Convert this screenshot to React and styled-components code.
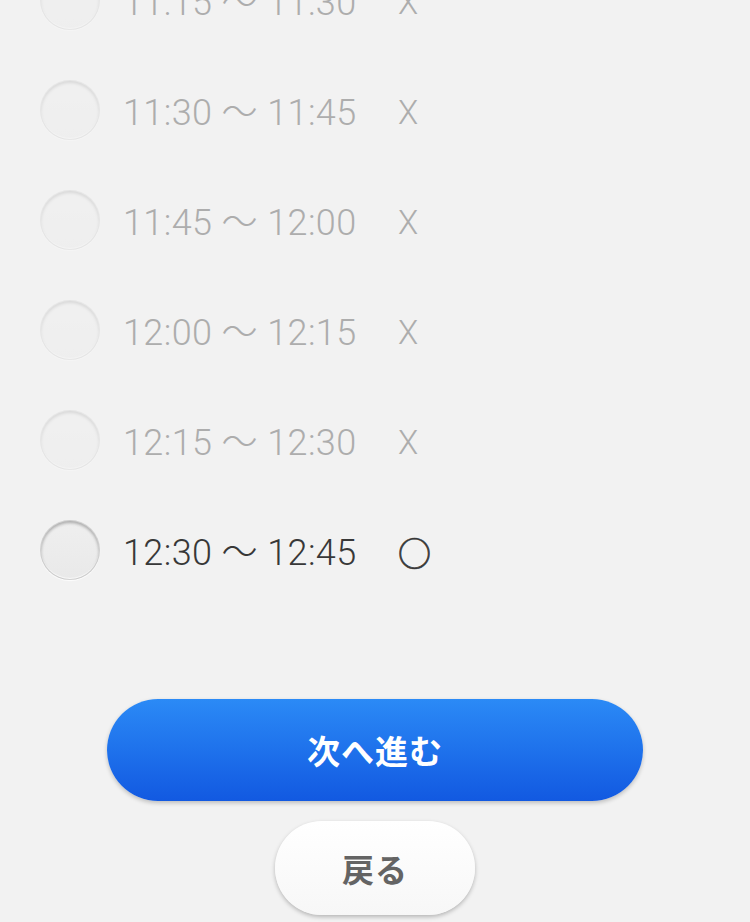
import React, { useState } from 'react';
import styled, { createGlobalStyle } from 'styled-components';

const GlobalStyle = createGlobalStyle`
  html, body {
    margin: 0;
    padding: 0;
    background: #f2f2f2;
  }
  body {
    font-family: "Noto Sans CJK JP", "Noto Sans", sans-serif;
    overflow: hidden;
  }
`;

const slots = [
  { from: '11:15', to: '11:30', open: false },
  { from: '11:30', to: '11:45', open: false },
  { from: '11:45', to: '12:00', open: false },
  { from: '12:00', to: '12:15', open: false },
  { from: '12:15', to: '12:30', open: false },
  { from: '12:30', to: '12:45', open: true },
];

const Page = styled.div`
  display: flex;
  flex-direction: column;
  width: 750px;
  height: 922px;
  background: #f2f2f2;
`;

const SlotList = styled.ul`
  list-style: none;
  margin: -55px 0 0;
  padding: 0 0 0 40px;
`;

const SlotRow = styled.li`
  display: flex;
  align-items: center;
  height: 110px;
  color: ${p => (p.$open ? '#383838' : '#adadad')};
`;

const Radio = styled.span`
  flex: none;
  width: 60px;
  height: 60px;
  border-radius: 50%;
  box-sizing: border-box;
  background: linear-gradient(#efefef, #e9e9e9);
  box-shadow:
    inset 0 2px 3px rgba(0, 0, 0, 0.28),
    inset 0 -1px 1px rgba(255, 255, 255, 0.9),
    0 1px 1px rgba(255, 255, 255, 0.9);
  border: 1px solid rgba(0, 0, 0, 0.12);
  opacity: ${p => (p.$open ? 1 : 0.35)};
`;

const Time = styled.span`
  margin-left: 23px;
  padding-top: 5px;
  width: 275px;
  font-family: Roboto, "Noto Sans CJK JP", sans-serif;
  font-size: 36px;
  font-weight: 300;
  letter-spacing: 0.4px;
  line-height: 1;
  white-space: nowrap;
`;

const Mark = styled.span`
  padding-top: 5px;
  font-size: 33px;
  font-weight: ${p => (p.$open ? 400 : 300)};
  line-height: 1;
  font-family: ${p => (p.$open ? '"Noto Sans CJK JP", sans-serif' : 'Roboto, sans-serif')};
  -webkit-text-stroke: ${p => (p.$open ? '0.7px #383838' : '0')};
`;

const Actions = styled.div`
  display: flex;
  flex-direction: column;
  align-items: center;
  gap: 20px;
  margin-top: 94px;
`;

const PrimaryButton = styled.button`
  width: 536px;
  height: 102px;
  border: none;
  border-radius: 51px;
  background: linear-gradient(#2b8af6, #1259e1);
  box-shadow: 0 2px 4px rgba(0, 0, 0, 0.22);
  color: #fff;
  font-family: "Noto Sans CJK JP", sans-serif;
  font-weight: 700;
  font-size: 33px;
  letter-spacing: 1px;
  cursor: pointer;
`;

const SecondaryButton = styled.button`
  width: 200px;
  height: 94px;
  border: none;
  border-radius: 47px;
  background: linear-gradient(#ffffff, #f7f7f7);
  box-shadow: 0 2px 4px rgba(0, 0, 0, 0.25);
  color: #646464;
  font-family: "Noto Sans CJK JP", sans-serif;
  font-weight: 700;
  font-size: 32px;
  letter-spacing: 1px;
  cursor: pointer;
`;

export default function App() {
  const [picked, setPicked] = useState(null);
  return (
    <Page>
      <GlobalStyle />
      <SlotList>
        {slots.map(s => (
          <SlotRow key={s.from} $open={s.open} onClick={() => s.open && setPicked(s.from)}>
            <Radio $open={s.open} aria-checked={picked === s.from} />
            <Time>{`${s.from} ～ ${s.to}`}</Time>
            <Mark $open={s.open}>{s.open ? '○' : 'X'}</Mark>
          </SlotRow>
        ))}
      </SlotList>
      <Actions>
        <PrimaryButton>次へ進む</PrimaryButton>
        <SecondaryButton>戻る</SecondaryButton>
      </Actions>
    </Page>
  );
}
